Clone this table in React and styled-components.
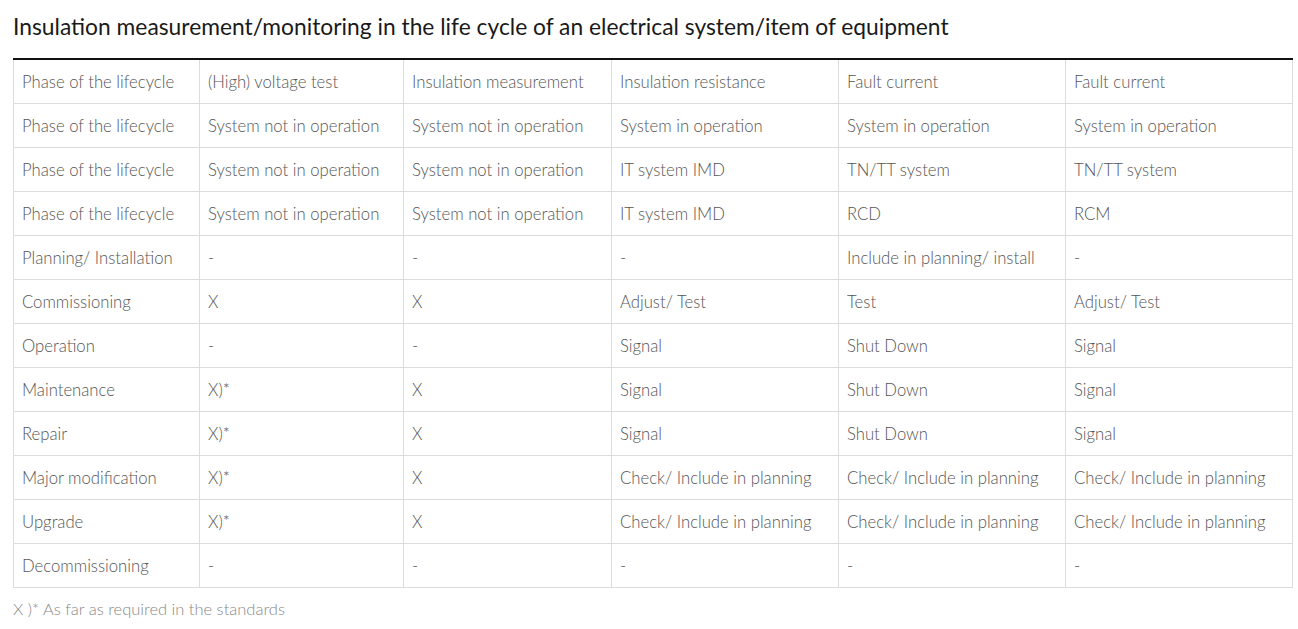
import React from "react";
import styled, { createGlobalStyle } from "styled-components";

const Global = createGlobalStyle`
  html, body { margin: 0; padding: 0; background: #fff; }
  body { font-family: Lato, "Noto Sans", sans-serif; }
`;

const Page = styled.div`
  padding: 10px 6px 0 13px;
`;

const Title = styled.h2`
  margin: 0 0 16px;
  font-size: 22.8px;
  line-height: 32px;
  font-weight: 400;
  color: #1a1a1a;
`;

const Table = styled.table`
  width: 1279px;
  border-collapse: collapse;
  table-layout: fixed;
  border-top: 2px solid #111;
`;

const Cell = styled.td`
  height: 43px;
  padding: 0 8px;
  border: 1px solid #dcdcdc;
  border-top: ${(p) => (p.$first ? "none" : "1px solid #dcdcdc")};
  font-size: 16.7px;
  font-weight: 300;
  color: #555;
  vertical-align: middle;
  white-space: nowrap;
`;

const Note = styled.p`
  margin: 11px 0 0;
  font-size: 16.5px;
  font-weight: 300;
  color: #888;
`;

const widths = [186, 204, 208, 227, 227, 227];

const rows = [
  ["Phase of the lifecycle", "(High) voltage test", "Insulation measurement", "Insulation resistance", "Fault current", "Fault current"],
  ["Phase of the lifecycle", "System not in operation", "System not in operation", "System in operation", "System in operation", "System in operation"],
  ["Phase of the lifecycle", "System not in operation", "System not in operation", "IT system IMD", "TN/TT system", "TN/TT system"],
  ["Phase of the lifecycle", "System not in operation", "System not in operation", "IT system IMD", "RCD", "RCM"],
  ["Planning/ Installation", "-", "-", "-", "Include in planning/ install", "-"],
  ["Commissioning", "X", "X", "Adjust/ Test", "Test", "Adjust/ Test"],
  ["Operation", "-", "-", "Signal", "Shut Down", "Signal"],
  ["Maintenance", "X)*", "X", "Signal", "Shut Down", "Signal"],
  ["Repair", "X)*", "X", "Signal", "Shut Down", "Signal"],
  ["Major modification", "X)*", "X", "Check/ Include in planning", "Check/ Include in planning", "Check/ Include in planning"],
  ["Upgrade", "X)*", "X", "Check/ Include in planning", "Check/ Include in planning", "Check/ Include in planning"],
  ["Decommissioning", "-", "-", "-", "-", "-"],
];

export default function App() {
  return (
    <Page>
      <Global />
      <Title>Insulation measurement/monitoring in the life cycle of an electrical system/item of equipment</Title>
      <Table>
        <colgroup>
          {widths.map((w, i) => (
            <col key={i} style={{ width: w }} />
          ))}
        </colgroup>
        <tbody>
          {rows.map((r, i) => (
            <tr key={i}>
              {r.map((c, j) => (
                <Cell key={j} $first={i === 0}>{c}</Cell>
              ))}
            </tr>
          ))}
        </tbody>
      </Table>
      <Note>X )* As far as required in the standards</Note>
    </Page>
  );
}
